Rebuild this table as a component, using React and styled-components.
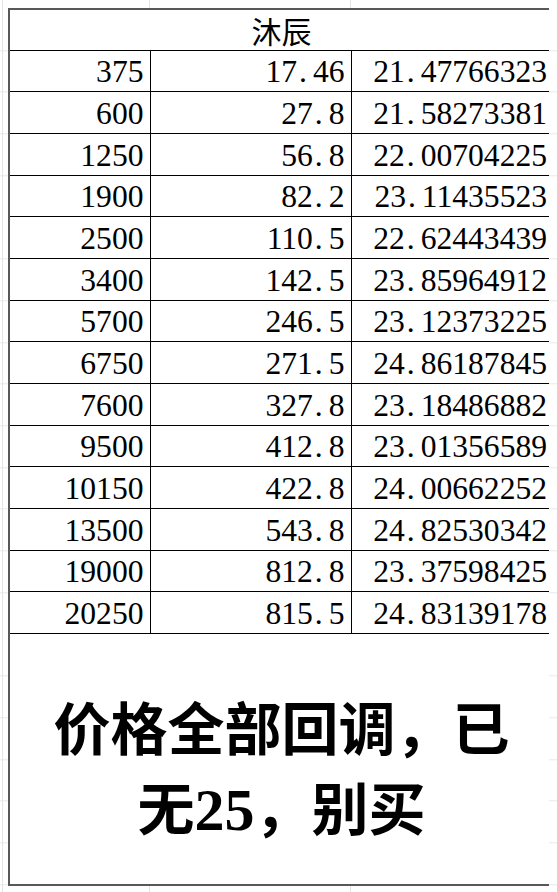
import React from 'react'
import styled, { createGlobalStyle } from 'styled-components'

const rows = [
  ['375', '17.46', '21.47766323'],
  ['600', '27.8', '21.58273381'],
  ['1250', '56.8', '22.00704225'],
  ['1900', '82.2', '23.11435523'],
  ['2500', '110.5', '22.62443439'],
  ['3400', '142.5', '23.85964912'],
  ['5700', '246.5', '23.12373225'],
  ['6750', '271.5', '24.86187845'],
  ['7600', '327.8', '23.18486882'],
  ['9500', '412.8', '23.01356589'],
  ['10150', '422.8', '24.00662252'],
  ['13500', '543.8', '24.82530342'],
  ['19000', '812.8', '23.37598425'],
  ['20250', '815.5', '24.83139178'],
]

const GlobalStyle = createGlobalStyle`
  html, body {
    height: 100%;
  }
  body {
    margin: 8px;
    font-family: "Liberation Serif", serif;
    color: #000;
    background-color: #fff;
    background-image:
      linear-gradient(to right, transparent 2px, #e4e4e4 2px, #e4e4e4 3px, transparent 3px),
      linear-gradient(to right, transparent 149px, #e4e4e4 149px, #e4e4e4 150px, transparent 150px),
      linear-gradient(to right, transparent 350px, #e4e4e4 350px, #e4e4e4 351px, transparent 351px),
      repeating-linear-gradient(to bottom, transparent 0, transparent 40.7px, #e8e8e8 40.7px, #e8e8e8 41.7px);
    background-position: 0 0, 0 0, 0 0, 0 9.3px;
    overflow: hidden;
  }
`

const Sheet = styled.table`
  border-collapse: collapse;
  table-layout: fixed;
  width: 545px;
  background: #fff;
  border: 2px solid #585858;
`

const Row = styled.tr`
  height: ${({ $h }) => $h}px;
`

const TitleCell = styled.td`
  border: 1px solid #000;
  padding: 0;
  text-align: center;
  vertical-align: middle;
  font-family: "Noto Sans CJK SC", sans-serif;
  font-size: 30px;
  line-height: 38px;
`

const NumCell = styled.td`
  border: 1px solid #000;
  padding: 0 6px 1px 0;
  text-align: right;
  vertical-align: bottom;
  font-family: "Liberation Serif", "Times New Roman", serif;
  font-size: 31.6px;
  line-height: normal;
  white-space: nowrap;
  overflow: hidden;
`

const Dot = styled.span`
  display: inline-block;
  width: 0.5em;
  padding-left: 0.06em;
  box-sizing: border-box;
  text-align: left;
`

const NoteCell = styled.td`
  border: 1px solid #000;
  padding: 18px 0 0;
  text-align: center;
  vertical-align: middle;
  font-family: "Noto Sans CJK SC", sans-serif;
  font-weight: 700;
  font-size: 57px;
  line-height: 80px;
`

const Digits = styled.span`
  font-family: "Liberation Serif", serif;
  font-weight: 700;
  font-size: 60px;
`

function Num({ value }) {
  const [int, frac] = value.split('.')
  return (
    <>
      {int}
      {frac !== undefined && (
        <>
          <Dot>.</Dot>
          {frac}
        </>
      )}
    </>
  )
}

export default function App() {
  return (
    <>
      <GlobalStyle />
      <Sheet>
        <colgroup>
          <col style={{ width: 141 }} />
          <col style={{ width: 201 }} />
          <col style={{ width: 203 }} />
        </colgroup>
        <tbody>
          <Row $h={41}>
            <TitleCell colSpan={3}>沐辰</TitleCell>
          </Row>
          {rows.map((r) => (
            <Row key={r[0]} $h={41.7}>
              {r.map((v, i) => (
                <NumCell key={i}>
                  <Num value={v} />
                </NumCell>
              ))}
            </Row>
          ))}
          <Row $h={251}>
            <NoteCell colSpan={3}>
              价格全部回调，已
              <br />
              无<Digits>25</Digits>，别买
            </NoteCell>
          </Row>
        </tbody>
      </Sheet>
    </>
  )
}
